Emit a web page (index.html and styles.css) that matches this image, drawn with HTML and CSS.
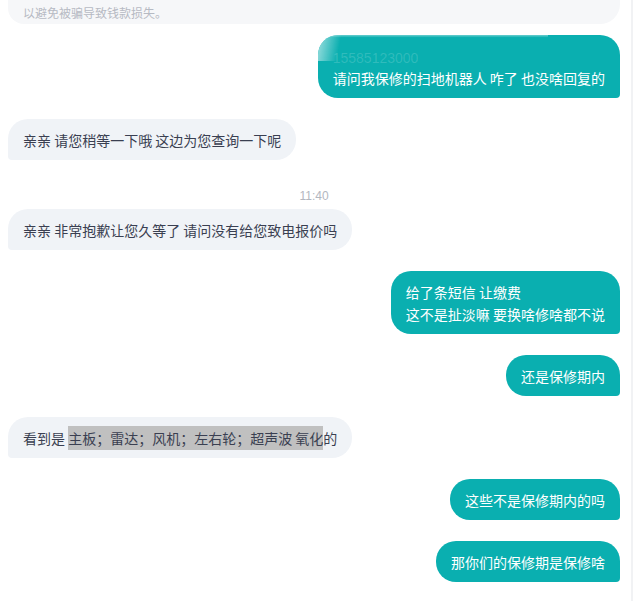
FILE: index.html
```html
<!DOCTYPE html>
<html lang="zh-CN">
<head>
    <meta charset="UTF-8">
    <title>聊天记录</title>
    <link rel="stylesheet" href="styles.css">
</head>
<body>
<div class="chat">
    <div class="notice">以避免被骗导致钱款损失。</div>

    <div class="row mine first">
        <div class="bubble">
            <div class="quote">15585123000</div>
            请问我保修的扫地机器人 咋了 也没啥回复的
        </div>
    </div>

    <div class="row">
        <div class="bubble">亲亲 请您稍等一下哦 这边为您查询一下呢</div>
    </div>

    <div class="time">11:40</div>

    <div class="row">
        <div class="bubble">亲亲 非常抱歉让您久等了 请问没有给您致电报价吗</div>
    </div>

    <div class="row mine">
        <div class="bubble">给了条短信 让缴费<br>这不是扯淡嘛 要换啥修啥都不说</div>
    </div>

    <div class="row mine">
        <div class="bubble">还是保修期内</div>
    </div>

    <div class="row">
        <div class="bubble">看到是 <span class="mark">主板；雷达；风机；左右轮；超声波 氧化</span>的</div>
    </div>

    <div class="row mine">
        <div class="bubble">这些不是保修期内的吗</div>
    </div>

    <div class="row mine">
        <div class="bubble">那你们的保修期是保修啥</div>
    </div>
</div>
</body>
</html>
```

FILE: styles.css
```css
html, body {
    margin: 0;
    background: #fff;
}
body {
    font: normal 14px/22px "Microsoft YaHei", "Noto Sans CJK SC", "Liberation Sans", sans-serif;
    color: #3a3f51;
    width: 633px;
    height: 601px;
    overflow: hidden;
}
.chat {
    width: 612px;
    height: 601px;
    padding: 0 11px 0 8px;
    border-right: 2px solid #f1f2f4;
    display: flex;
    flex-direction: column;
}
.notice {
    height: 24px;
    padding-left: 15px;
    font-size: 12px;
    line-height: 26px;
    color: #b6bac3;
    background: #f6f7f9;
    border-radius: 0 0 20px 16px;
}
.row {
    display: flex;
    margin-top: 21px;
}
.row.first {
    margin-top: 11px;
}
.row.mine {
    justify-content: flex-end;
}
.bubble {
    padding: 10px 15px 9px;
    background: #f0f3f7;
    border-radius: 20px 20px 20px 4px;
    white-space: nowrap;
}
.mine .bubble {
    color: #fff;
    background: #0aafb0;
    border-radius: 20px 20px 4px 20px;
}
.first .bubble {
    position: relative;
    overflow: hidden;
}
.first .bubble::before {
    content: "";
    position: absolute;
    left: 0;
    top: 0;
    width: 230px;
    height: 26px;
    border-radius: 20px 0 0 0;
    background: linear-gradient(100deg, rgba(255, 255, 255, .6) 0, rgba(255, 255, 255, 0) 10%),
                linear-gradient(180deg, rgba(255, 255, 255, .4) 0, rgba(255, 255, 255, 0) 10%);
}
.quote {
    font-family: "Liberation Sans", sans-serif;
    color: rgba(255, 255, 255, .16);
    height: 22px;
    line-height: 26px;
    overflow: hidden;
}
.time {
    margin-top: 27px;
    text-align: center;
    font-size: 12px;
    line-height: 18px;
    color: #b3b7bf;
    font-family: "Liberation Sans", sans-serif;
}
.time + .row {
    margin-top: 4px;
}
.mark {
    background: #c0c0c0;
    padding: 2px 0;
}
```
